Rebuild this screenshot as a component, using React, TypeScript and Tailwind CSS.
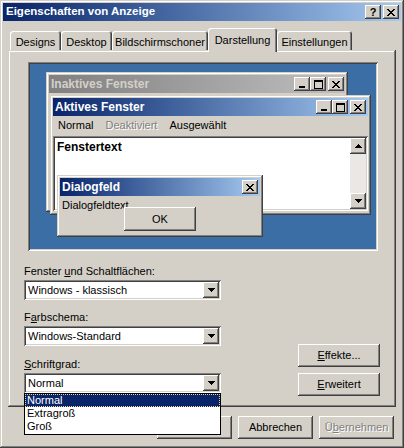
import React from 'react';

const raised =
  'bg-[#d4d0c8] shadow-[inset_-1px_-1px_#404040,inset_1px_1px_#ffffff,inset_-2px_-2px_#808080,inset_2px_2px_#d4d0c8]';
const frame =
  'bg-[#d4d0c8] shadow-[inset_-1px_-1px_#404040,inset_1px_1px_#d4d0c8,inset_-2px_-2px_#808080,inset_2px_2px_#ffffff]';
const sunken =
  'shadow-[inset_1px_1px_#808080,inset_-1px_-1px_#ffffff,inset_2px_2px_#404040,inset_-2px_-2px_#d4d0c8]';

function CloseGlyph() {
  return (
    <svg width="8" height="7" viewBox="0 0 8 7" shapeRendering="crispEdges">
      <path
        d="M0 0h2v1H0zM6 0h2v1H6zM1 1h2v1H1zM5 1h2v1H5zM2 2h4v1H2zM3 3h2v1H3zM2 4h4v1H2zM1 5h2v1H1zM5 5h2v1H5zM0 6h2v1H0zM6 6h2v1H6z"
        fill="#000"
      />
    </svg>
  );
}

function MinGlyph() {
  return (
    <svg width="8" height="7" viewBox="0 0 8 7" shapeRendering="crispEdges">
      <rect x="1" y="5" width="6" height="2" fill="#000" />
    </svg>
  );
}

function MaxGlyph() {
  return (
    <svg width="9" height="9" viewBox="0 0 9 9" shapeRendering="crispEdges">
      <path d="M0 0h9v2H0zM0 2h1v7H0zM8 2h1v7H8zM1 8h7v1H1z" fill="#000" />
    </svg>
  );
}

function DownArrow() {
  return (
    <svg width="7" height="4" viewBox="0 0 7 4" shapeRendering="crispEdges">
      <path d="M0 0h7v1H0zM1 1h5v1H1zM2 2h3v1H2zM3 3h1v1H3z" fill="#000" />
    </svg>
  );
}

function UpArrow() {
  return (
    <svg width="7" height="4" viewBox="0 0 7 4" shapeRendering="crispEdges">
      <path d="M3 0h1v1H3zM2 1h3v1H2zM1 2h5v1H1zM0 3h7v1H0z" fill="#000" />
    </svg>
  );
}

function CapButton({ children }: { children: React.ReactNode }) {
  return (
    <div className={`w-[16px] h-[14px] flex items-center justify-center ${raised}`}>
      {children}
    </div>
  );
}

function WinControls() {
  return (
    <div className="flex items-center">
      <CapButton>
        <MinGlyph />
      </CapButton>
      <CapButton>
        <MaxGlyph />
      </CapButton>
      <div className="w-[2px]" />
      <CapButton>
        <CloseGlyph />
      </CapButton>
    </div>
  );
}

function Combo({ text, children }: { text: string; children?: React.ReactNode }) {
  return (
    <div className={`relative h-[20px] w-[197px] bg-white flex items-center ${sunken}`}>
      <span className="flex-1 pl-[4px] leading-[13px]">{text}</span>
      <div className={`w-[16px] h-[16px] mr-[2px] flex items-center justify-center ${raised}`}>
        <DownArrow />
      </div>
      {children}
    </div>
  );
}

function Button({
  children,
  className = '',
}: {
  children: React.ReactNode;
  className?: string;
}) {
  return (
    <div className={`flex items-center justify-center ${raised} ${className}`}>{children}</div>
  );
}

const tabs = [
  { label: 'Designs', w: 'w-[51px]' },
  { label: 'Desktop', w: 'w-[51px]' },
  { label: 'Bildschirmschoner', w: 'w-[96px]' },
  { label: 'Darstellung', w: 'w-[69px]', active: true },
  { label: 'Einstellungen', w: 'w-[75px]' },
];

export default function App() {
  return (
    <div
      className={`w-[404px] h-[448px] p-[3px] flex flex-col overflow-hidden text-[11px] text-black font-['Liberation_Sans',Arial,sans-serif] ${frame}`}
    >
      {/* Title bar */}
      <div className="h-[18px] shrink-0 flex items-center pl-[3px] pr-[2px] bg-linear-to-r from-[#0a246a] to-[#a6caf0]">
        <span className="flex-1 text-white font-bold text-[11.5px] leading-none">
          Eigenschaften von Anzeige
        </span>
        <CapButton>
          <span className="font-bold text-[11px] leading-none pt-[1px]">?</span>
        </CapButton>
        <div className="w-[2px]" />
        <CapButton>
          <CloseGlyph />
        </CapButton>
      </div>

      {/* Tabs */}
      <div className="mt-[7px] h-[22px] shrink-0 flex items-end pl-[7px]">
        {tabs.map((t) =>
          t.active ? (
            <div
              key={t.label}
              className={`${t.w} h-[24px] -mb-[2px] relative z-10 rounded-t-[3px] bg-[#d4d0c8] flex justify-center pt-[4px] shadow-[inset_1px_1px_#ffffff,inset_-1px_0_#404040,inset_-2px_0_#808080]`}
            >
              {t.label}
            </div>
          ) : (
            <div
              key={t.label}
              className={`${t.w} h-[19px] rounded-t-[3px] bg-[#d4d0c8] flex justify-center pt-[3px] shadow-[inset_1px_1px_#ffffff,inset_-1px_0_#404040,inset_-2px_0_#808080]`}
            >
              {t.label}
            </div>
          )
        )}
      </div>

      {/* Panel */}
      <div className={`ml-[5px] w-[388px] h-[357px] shrink-0 flex flex-col ${frame}`}>
        {/* Preview */}
        <div className={`ml-[20px] mt-[12px] w-[350px] h-[189px] relative bg-[#3a6ea5] ${sunken}`}>
          {/* inactive window */}
          <div className={`absolute left-[18px] top-[10px] w-[302px] h-[140px] p-[3px] ${frame}`}>
            <div className="h-[18px] flex items-center pl-[2px] pr-[1px] bg-linear-to-r from-[#808080] to-[#c0c0c0]">
              <span className="flex-1 font-bold text-[12px] leading-none text-[#d4d0c8]">
                Inaktives Fenster
              </span>
              <WinControls />
            </div>
          </div>

          {/* active window */}
          <div className={`absolute left-[22px] top-[33px] w-[321px] h-[120px] p-[3px] flex flex-col ${frame}`}>
            <div className="h-[18px] shrink-0 flex items-center pl-[2px] pr-[2px] bg-linear-to-r from-[#0a246a] to-[#a6caf0]">
              <span className="flex-1 font-bold text-[12px] leading-none text-white">
                Aktives Fenster
              </span>
              <WinControls />
            </div>
            <div className="h-[19px] shrink-0 flex items-center gap-[12px] pl-[5px]">
              <span>Normal</span>
              <span className="text-[#808080] [text-shadow:1px_1px_0_#ffffff]">Deaktiviert</span>
              <span>Ausgewählt</span>
            </div>
            <div className={`mt-[1px] h-[75px] w-[315px] bg-white p-[2px] flex ${sunken}`}>
              <div className="flex-1 pl-[2px] pt-[2px] font-bold text-[12px] leading-[14px]">
                Fenstertext
              </div>
              <div className="w-[16px] flex flex-col bg-[#eae8e4]">
                <div className={`h-[16px] flex items-center justify-center ${raised}`}>
                  <UpArrow />
                </div>
                <div className="flex-1" />
                <div className={`h-[16px] flex items-center justify-center ${raised}`}>
                  <DownArrow />
                </div>
              </div>
            </div>
          </div>

          {/* dialog */}
          <div className={`absolute left-[29px] top-[113px] w-[206px] h-[62px] p-[3px] flex flex-col ${frame}`}>
            <div className="h-[18px] shrink-0 flex items-center pl-[2px] pr-[2px] bg-linear-to-r from-[#0a246a] to-[#a6caf0]">
              <span className="flex-1 font-bold text-[12px] leading-none text-white">Dialogfeld</span>
              <CapButton>
                <CloseGlyph />
              </CapButton>
            </div>
            <div className="mt-[3px] pl-[2px] leading-[13px]">Dialogfeldtext</div>
            <Button className="ml-[64px] -mt-[5px] w-[72px] h-[24px] relative">OK</Button>
          </div>
        </div>

        {/* Settings */}
        <div className="flex pl-[16px]">
          <div className="w-[197px] mt-[13px] flex flex-col">
            <div className="h-[14px] leading-[14px] mb-[2px]">
              Fenster <span className="underline underline-offset-[1px]">u</span>nd Schaltflächen:
            </div>
            <Combo text="Windows - klassisch" />
            <div className="mt-[10px] h-[14px] leading-[14px] mb-[2px]">
              F<span className="underline underline-offset-[1px]">a</span>rbschema:
            </div>
            <Combo text="Windows-Standard" />
            <div className="mt-[11px] h-[14px] leading-[14px] mb-[2px]">
              <span className="underline underline-offset-[1px]">S</span>chriftgrad:
            </div>
            <Combo text="Normal">
              <div className="absolute left-0 top-[20px] w-[197px] z-20 bg-white border border-black pb-[1px] flex flex-col">
                <div className="h-[13px] leading-[11px] px-[1px] bg-[#0a246a] text-white border border-dotted border-[#e8d890]">
                  Normal
                </div>
                <div className="h-[13px] leading-[13px] px-[2px]">Extragroß</div>
                <div className="h-[13px] leading-[13px] px-[2px]">Groß</div>
              </div>
            </Combo>
          </div>
          <div className="ml-[77px] mt-[93px] w-[82px] flex flex-col gap-[6px]">
            <Button className="h-[23px]">
              <span>
                <span className="underline underline-offset-[1px]">E</span>ffekte...
              </span>
            </Button>
            <Button className="h-[23px]">
              <span>
                <span className="underline underline-offset-[1px]">E</span>rweitert
              </span>
            </Button>
          </div>
        </div>
      </div>

      {/* Bottom buttons */}
      <div className="mt-[9px] flex pl-[154px] gap-[6px]">
        <Button className="w-[75px] h-[23px]">OK</Button>
        <Button className="w-[75px] h-[23px]">Abbrechen</Button>
        <Button className="w-[75px] h-[23px]">
          <span className="text-[#808080] [text-shadow:1px_1px_0_#ffffff]">
            Ü<span className="underline underline-offset-[1px]">b</span>ernehmen
          </span>
        </Button>
      </div>
    </div>
  );
}
